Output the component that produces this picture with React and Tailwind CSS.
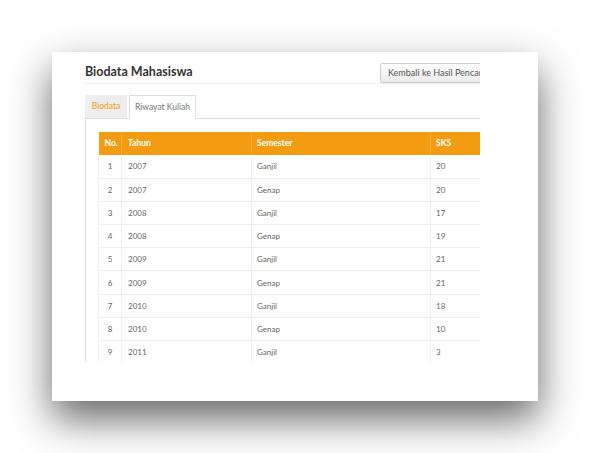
const rows = [
  [1, "2007", "Ganjil", "20"],
  [2, "2007", "Genap", "20"],
  [3, "2008", "Ganjil", "17"],
  [4, "2008", "Genap", "19"],
  [5, "2009", "Ganjil", "21"],
  [6, "2009", "Genap", "21"],
  [7, "2010", "Ganjil", "18"],
  [8, "2010", "Genap", "10"],
  [9, "2011", "Ganjil", "3"],
];

export default function App() {
  return (
    <div
      className="w-[590px] h-[453px] bg-white overflow-hidden"
      style={{ fontFamily: 'Lato, "Open Sans", sans-serif' }}
    >
      <div className="ml-[52px] mt-[52px] w-[486px] h-[349px] bg-white shadow-[0_18px_38px_rgba(0,0,0,0.6)] pl-[33px] pt-[11px]">
        {/* clipped content area */}
        <div className="w-[395px] h-[299px] overflow-hidden">
          <div className="w-[470px]">
            {/* Title row */}
            <div className="flex items-center h-[21px] border-b border-[#f0f0f0]">
              <h1 className="text-[12.5px] font-bold text-[#333] leading-none -mt-[2px]">
                Biodata Mahasiswa
              </h1>
              <button className="ml-auto mr-[30px] w-[145px] h-[20px] -mt-[1px] text-left pl-[7px] text-[9px] text-[#555] border border-[#ccc] rounded-[2px] bg-gradient-to-b from-white to-[#ececec] whitespace-nowrap">
                Kembali ke Hasil Pencarian
              </button>
            </div>

            {/* Tabs */}
            <div className="flex mt-[11px] h-[24px] border-b border-[#ddd] text-[8.5px]">
              <div className="w-[42px] bg-[#eeeeee] text-[#f39c12] flex items-center justify-center">
                Biodata
              </div>
              <div className="ml-[2px] w-[67px] bg-white border border-b-0 border-[#ddd] text-[#777] flex items-center justify-center mb-[-1px]">
                Riwayat Kuliah
              </div>
            </div>

            {/* Tab content */}
            <div className="border-l border-[#ddd] pl-[12px] pt-[13px] h-[260px]">
              <table className="w-[450px] table-fixed border-collapse text-[8px]">
                <colgroup>
                  <col className="w-[23px]" />
                  <col className="w-[130px]" />
                  <col className="w-[179px]" />
                  <col />
                </colgroup>
                <thead>
                  <tr className="bg-[#f39c12] text-white font-bold h-[23px] text-[8.5px]">
                    <th className="text-left pl-[6px] border-r border-[#f5a93a]">No.</th>
                    <th className="text-left pl-[6px] border-r border-[#f5a93a]">Tahun</th>
                    <th className="text-left pl-[5px] border-r border-[#f5a93a]">Semester</th>
                    <th className="text-left pl-[5px]">SKS</th>
                  </tr>
                </thead>
                <tbody className="text-[#666]">
                  {rows.map((r) => (
                    <tr key={r[0]} className="h-[23.2px] border-b border-[#eeeeee]">
                      <td className="text-center border-l border-r border-[#f0f0f0]">{r[0]}</td>
                      <td className="pl-[6px] border-r border-[#f0f0f0]">{r[1]}</td>
                      <td className="pl-[5px] border-r border-[#f0f0f0]">{r[2]}</td>
                      <td className="pl-[5px]">{r[3]}</td>
                    </tr>
                  ))}
                </tbody>
              </table>
            </div>
          </div>
        </div>
      </div>
    </div>
  );
}
